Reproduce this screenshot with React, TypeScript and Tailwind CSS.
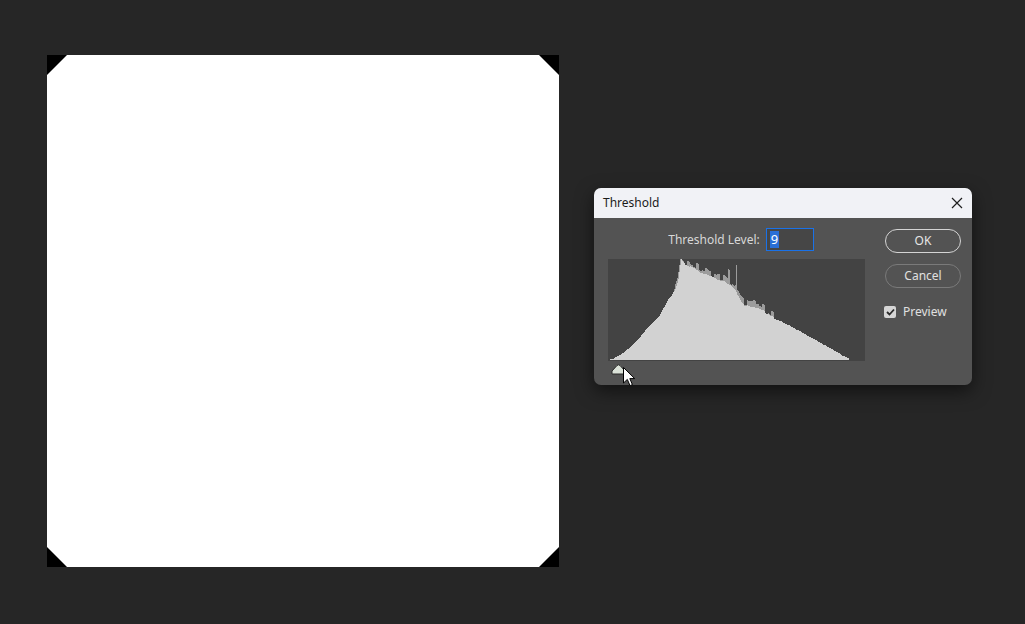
import React from "react";

// histogram outline, sampled by hand from the screenshot: [bin, height]
const outline: [number, number][] = [
  [0, 0], [12, 6], [25, 17], [35, 29], [50, 45], [59, 61], [66, 72], [69, 82],
  [71, 96], [72, 101], [76, 96], [85, 92], [102, 84], [115, 80], [125, 73],
  [130, 62], [135, 56], [152, 51], [172, 39], [205, 21], [240, 1], [241, 0], [256, 0],
];

const noise = (i: number) => {
  const v = Math.sin(i * 12.9898) * 43758.5453;
  return v - Math.floor(v);
};

const heightAt = (i: number) => {
  for (let k = 0; k < outline.length - 1; k++) {
    const [x0, y0] = outline[k];
    const [x1, y1] = outline[k + 1];
    if (i >= x0 && i <= x1) return y0 + ((y1 - y0) * (i - x0)) / Math.max(1, x1 - x0);
  }
  return 0;
};

// smooth slope, noise in ~3px chunks
const bins = Array.from({ length: 256 }, (_, i) => {
  const g = Math.floor(i / 3);
  const base = heightAt(i);
  const jitter = i > 60 && i < 180 ? noise(g) * 4 : noise(g) * 1.5;
  const light = Math.max(0, Math.round(base - jitter * 0.5));
  let gray = i > 64 && i < 165 ? Math.round(light + noise(g + 99) * 7) : light;
  if (i === 127) gray = 95;
  if (i >= 119 && i <= 120) gray = light + 15;
  return { light, gray };
});

const Histogram = () => (
  <svg width={257} height={102} viewBox="0 0 257 102" className="block">
    <rect width={257} height={102} fill="#434343" />
    {bins.map((b, i) =>
      b.gray > b.light ? (
        <rect key={`g${i}`} x={i + 1} y={101 - b.gray} width={1} height={b.gray - b.light} fill="#9c9c9c" />
      ) : null
    )}
    {bins.map((b, i) =>
      b.light > 0 ? (
        <rect key={`l${i}`} x={i + 1} y={101 - b.light} width={1} height={b.light} fill="#d2d2d2" />
      ) : null
    )}
  </svg>
);

const Canvas = () => (
  <div className="relative w-[512px] h-[512px] bg-white shrink-0">
    <svg width={512} height={512} className="absolute inset-0">
      <polygon points="0,0 20,0 0,20" fill="#000" />
      <polygon points="512,0 492,0 512,20" fill="#000" />
      <polygon points="0,512 20,512 0,492" fill="#000" />
      <polygon points="512,512 492,512 512,492" fill="#000" />
    </svg>
  </div>
);

export default function App() {
  return (
    <div
      className="w-full h-[624px] bg-[#262626] flex items-start overflow-hidden"
      style={{ fontFamily: '"Noto Sans", "Open Sans", sans-serif' }}
    >
      <div className="ml-[47px] mt-[55px]">
        <Canvas />
      </div>

      {/* Threshold dialog */}
      <div className="ml-[35px] mt-[188px] w-[378px] h-[197px] rounded-[7px] overflow-hidden bg-[#535353] shadow-[0_6px_18px_rgba(0,0,0,0.55)] flex flex-col">
        <div className="h-[30px] bg-[#f1f2f6] flex items-center justify-between pl-[9px] pr-[9px]">
          <span className="text-[12px] text-[#1b1b1b]">Threshold</span>
          <svg width={12} height={12} viewBox="0 0 12 12">
            <path d="M1 1 L11 11 M11 1 L1 11" stroke="#1f1f1f" strokeWidth={1.2} />
          </svg>
        </div>

        <div className="flex flex-1">
          <div className="ml-[14px] pt-[10px] w-[257px] flex flex-col">
            <div className="h-[23px] flex items-center justify-center gap-[6px] pl-[9px]">
              <span className="text-[12px] text-[#d8d8d8]">Threshold Level:</span>
              <div className="w-[48px] h-[23px] border border-[#1a72e8] bg-[#464646] flex items-center pl-[3px]">
                <span className="bg-[#2a6fd6] text-white text-[13px] leading-[17px] px-[1px]">9</span>
              </div>
            </div>
            <div className="mt-[8px]">
              <Histogram />
            </div>
            <div className="relative h-[24px]">
              <svg width={15} height={11} viewBox="0 0 15 11" className="absolute left-[3px] top-[3px]">
                <path d="M1 10 L1 7 L6 1.5 Q7.5 0 9 1.5 L14 7 L14 10 Z" fill="#dbe2d8" stroke="#2b2b2b" strokeWidth={1} />
              </svg>
              <svg width={13} height={20} viewBox="0 0 13 20" className="absolute left-[15px] top-[6px]">
                <path d="M0.5 0.5 L0.5 16 L4.3 12.4 L7 18.6 L9.4 17.6 L6.8 11.6 L11.7 11.6 Z" fill="#fff" stroke="#000" strokeWidth={1} strokeLinejoin="round" />
              </svg>
            </div>
          </div>

          <div className="ml-auto mr-[11px] pt-[11px] w-[76px] flex flex-col">
            <button className="h-[24px] rounded-full border-[1.5px] border-[#d4d4d4] text-[12px] text-[#e6e6e6]">
              OK
            </button>
            <button className="mt-[11px] h-[24px] rounded-full border border-[#7a7a7a] text-[12px] text-[#e0e0e0]">
              Cancel
            </button>
            <div className="mt-[15px] flex items-center gap-[7px] -ml-[1px]">
              <div className="w-[12px] h-[12px] rounded-[2px] bg-[#d6d6d6] flex items-center justify-center">
                <svg width={9} height={8} viewBox="0 0 9 8">
                  <path d="M1 4 L3.5 6.5 L8 1.5" fill="none" stroke="#2a2a2a" strokeWidth={1.8} />
                </svg>
              </div>
              <span className="text-[12px] text-[#e0e0e0]">Preview</span>
            </div>
          </div>
        </div>
      </div>
    </div>
  );
}
